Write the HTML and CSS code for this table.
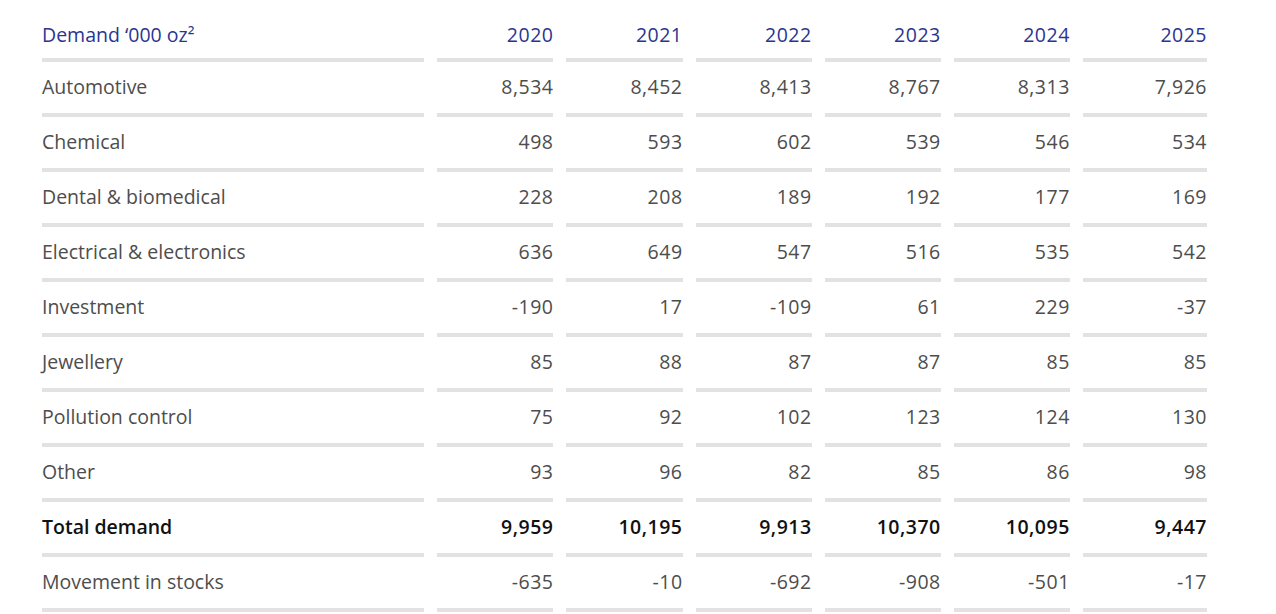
FILE: index.html
```html
<!DOCTYPE html>
<html lang="en">
<head>
<meta charset="utf-8">
<title>Demand</title>
<link rel="stylesheet" href="styles.css">
</head>
<body>
<table class="data">
  <colgroup>
    <col class="c-label">
    <col class="c-num"><col class="c-num"><col class="c-num"><col class="c-num"><col class="c-num">
    <col class="c-last">
  </colgroup>
  <thead>
    <tr>
      <th class="label">Demand ‘000 oz²</th>
      <th>2020</th><th>2021</th><th>2022</th><th>2023</th><th>2024</th><th>2025</th>
    </tr>
  </thead>
  <tbody>
    <tr><td class="label">Automotive</td><td>8,534</td><td>8,452</td><td>8,413</td><td>8,767</td><td>8,313</td><td>7,926</td></tr>
    <tr><td class="label">Chemical</td><td>498</td><td>593</td><td>602</td><td>539</td><td>546</td><td>534</td></tr>
    <tr><td class="label">Dental &amp; biomedical</td><td>228</td><td>208</td><td>189</td><td>192</td><td>177</td><td>169</td></tr>
    <tr><td class="label">Electrical &amp; electronics</td><td>636</td><td>649</td><td>547</td><td>516</td><td>535</td><td>542</td></tr>
    <tr><td class="label">Investment</td><td>-190</td><td>17</td><td>-109</td><td>61</td><td>229</td><td>-37</td></tr>
    <tr><td class="label">Jewellery</td><td>85</td><td>88</td><td>87</td><td>87</td><td>85</td><td>85</td></tr>
    <tr><td class="label">Pollution control</td><td>75</td><td>92</td><td>102</td><td>123</td><td>124</td><td>130</td></tr>
    <tr><td class="label">Other</td><td>93</td><td>96</td><td>82</td><td>85</td><td>86</td><td>98</td></tr>
    <tr class="total"><td class="label">Total demand</td><td>9,959</td><td>10,195</td><td>9,913</td><td>10,370</td><td>10,095</td><td>9,447</td></tr>
    <tr><td class="label">Movement in stocks</td><td>-635</td><td>-10</td><td>-692</td><td>-908</td><td>-501</td><td>-17</td></tr>
  </tbody>
</table>
</body>
</html>
```
FILE: styles.css
```css
html, body {
  margin: 0;
  padding: 0;
  background: #ffffff;
}

body {
  font-family: "Open Sans", "Noto Sans", "Liberation Sans", sans-serif;
  font-size: 19.5px;
  color: #4d4d4d;
}

.data {
  margin: 12px 0 0 29px;
  border-collapse: separate;
  border-spacing: 13px 0;
  table-layout: fixed;
  width: 1191px;
}

.c-label { width: 382px; }
.c-num { width: 116px; }
.c-last { width: 124px; }

.data th,
.data td {
  box-sizing: border-box;
  padding: 0;
  text-align: right;
  vertical-align: middle;
  border-bottom: 4px solid #e2e2e2;
  white-space: nowrap;
  letter-spacing: 0.5px;
  line-height: 24px;
}

.data th {
  height: 50px;
  padding-bottom: 1px;
  color: #2b3590;
  font-weight: 400;
}

.data td {
  height: 55px;
  padding-bottom: 2px;
}

.data .label {
  text-align: left;
  letter-spacing: 0;
}

.total td {
  color: #111111;
  font-weight: 600;
}
```
